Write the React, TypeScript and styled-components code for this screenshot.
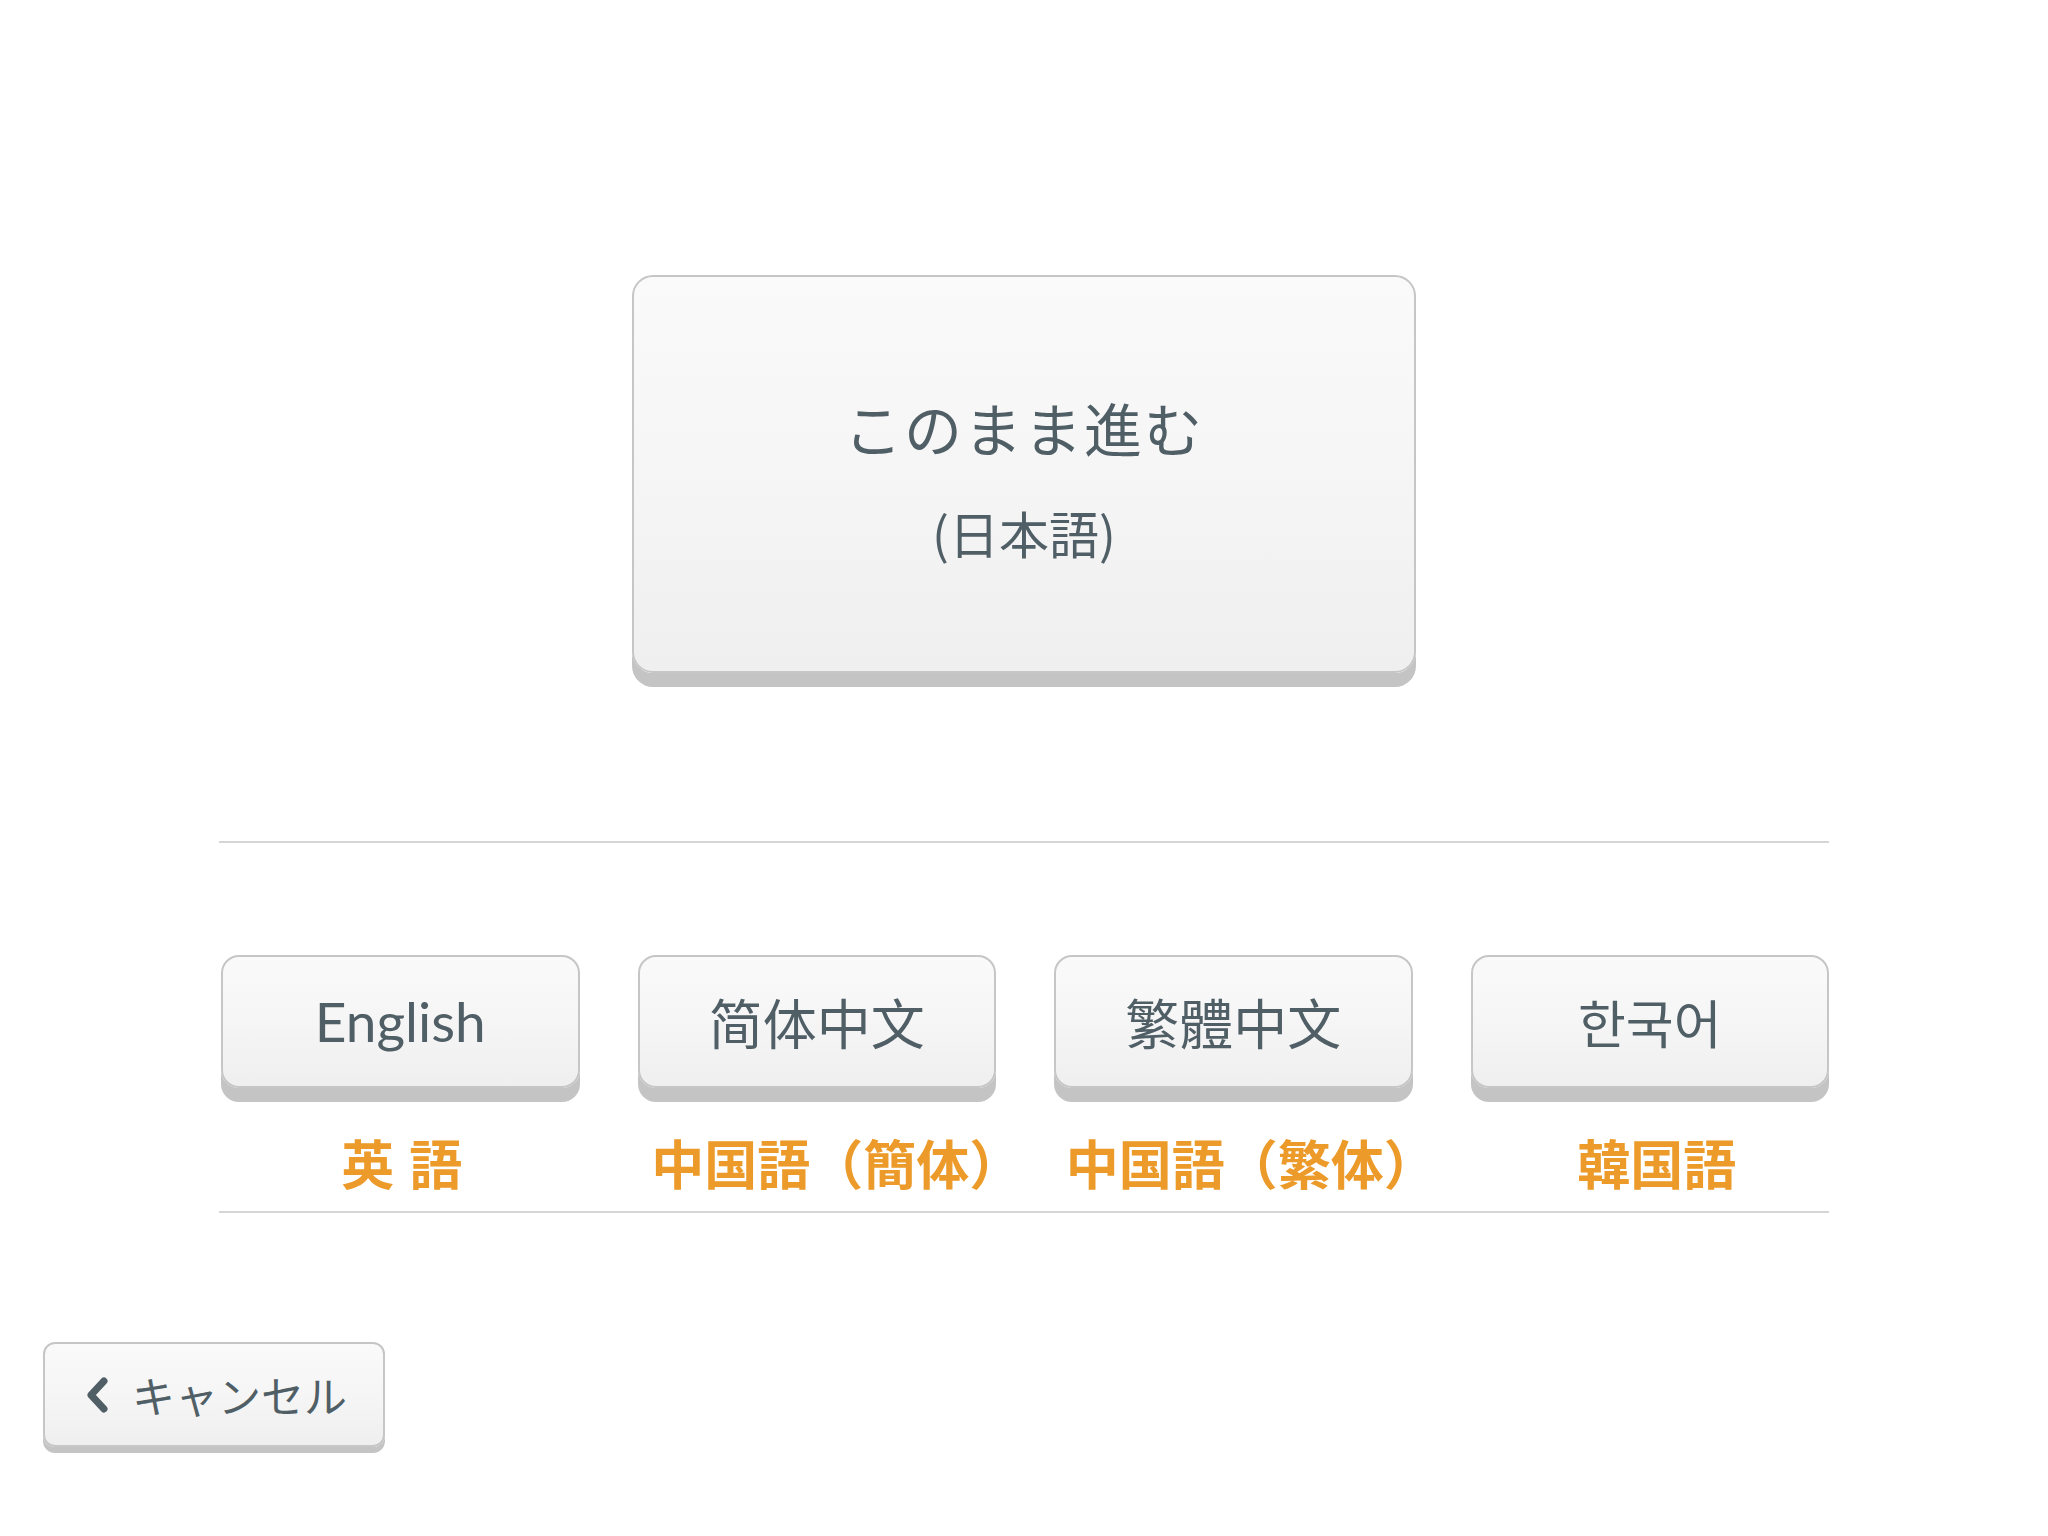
import React from "react";
import styled, { createGlobalStyle } from "styled-components";

const GlobalStyle = createGlobalStyle`
  html, body { margin: 0; padding: 0; background: #ffffff; }
  body { font-family: "Noto Sans CJK JP", "Noto Sans", sans-serif; }
`;

const TEXT = "#505e66";
const ORANGE = "#ec9a29";

const Page = styled.div`
  width: 100%;
  min-height: 1536px;
  display: flex;
  flex-direction: column;
  background: #ffffff;
`;

const Hero = styled.div`
  display: flex;
  justify-content: center;
  padding-top: 275px;
`;

const buttonSurface = `
  box-sizing: border-box;
  border: 2px solid #c6c6c6;
  background: linear-gradient(to bottom, #fafafa 0%, #f6f6f6 45%, #efefef 100%);
  color: ${TEXT};
  cursor: pointer;
`;

const MainButton = styled.button`
  ${buttonSurface}
  width: 784px;
  height: 398px;
  border-radius: 21px;
  box-shadow: 0 14px 0 #c4c4c4;
  display: flex;
  flex-direction: column;
  align-items: center;
  justify-content: flex-start;
  padding: 120px 0 0;
  gap: 48px;
`;

const MainTitle = styled.span`
  font-family: "Noto Sans CJK JP", sans-serif;
  font-size: 58px;
  font-weight: 400;
  line-height: 60px;
  letter-spacing: 2px;
`;

const MainSub = styled.span`
  font-family: "Noto Sans CJK JP", sans-serif;
  font-size: 50px;
  font-weight: 400;
  line-height: 54px;
`;

const Section = styled.div`
  width: 1610px;
  margin: 168px auto 0;
  display: flex;
  flex-direction: column;
`;

const Divider = styled.div`
  height: 2px;
  background: #d6d6d6;
`;

const LangGrid = styled.div`
  display: grid;
  grid-template-columns: repeat(4, minmax(0, 1fr));
  column-gap: 58px;
  margin: 112px 0 19px 2px;
`;

const LangItem = styled.div`
  display: flex;
  flex-direction: column;
  align-items: center;
  min-width: 0;
`;

const fontFor: Record<string, { family: string; size: number }> = {
  en: { family: `Lato, "Noto Sans", sans-serif`, size: 55 },
  sc: { family: `"Noto Sans CJK SC", sans-serif`, size: 54 },
  tc: { family: `"Noto Sans CJK TC", sans-serif`, size: 54 },
  ko: { family: `"Noto Sans CJK KR", sans-serif`, size: 52 },
};

const LangButton = styled.button<{ $font: string }>`
  ${buttonSurface}
  width: 100%;
  height: 133px;
  border-radius: 18px;
  box-shadow: 0 14px 0 #c4c4c4;
  display: flex;
  align-items: center;
  justify-content: center;
  padding: 0;
  font-family: ${(p) => fontFor[p.$font].family};
  font-size: ${(p) => fontFor[p.$font].size}px;
  font-weight: 400;
  line-height: 1;
`;

const LangLabel = styled.div<{ $shift: number }>`
  margin-top: 44px;
  height: 60px;
  font-family: "Noto Sans CJK JP", sans-serif;
  font-size: 53px;
  font-weight: 700;
  line-height: 60px;
  color: ${ORANGE};
  white-space: pre;
  word-spacing: 3px;
  text-spacing-trim: space-all;
  padding-left: ${(p) => p.$shift}px;
`;

const Footer = styled.div`
  display: flex;
  padding: 129px 43px 0;
`;

const CancelButton = styled.button`
  ${buttonSurface}
  width: 342px;
  height: 105px;
  border-radius: 12px;
  box-shadow: 0 6px 0 #c4c4c4;
  display: flex;
  align-items: center;
  padding: 0 0 0 41px;
  gap: 22px;
  font-family: "Noto Sans CJK JP", sans-serif;
  font-size: 43px;
  font-weight: 400;
  line-height: 1;
`;

const Chevron = () => (
  <svg width="24" height="36" viewBox="0 0 24 36" aria-hidden="true">
    <polyline
      points="18,4 5,18 18,32"
      fill="none"
      stroke={TEXT}
      strokeWidth="7"
      strokeLinecap="round"
      strokeLinejoin="round"
    />
  </svg>
);

const languages = [
  { key: "en", text: "English", label: "英 語", shift: 3 },
  { key: "sc", text: "简体中文", label: "中国語（簡体）", shift: 40 },
  { key: "tc", text: "繁體中文", label: "中国語（繁体）", shift: 36 },
  { key: "ko", text: "한국어", label: "韓国語", shift: 14 },
];

export default function App() {
  return (
    <>
      <GlobalStyle />
      <Page>
        <Hero>
          <MainButton>
            <MainTitle>このまま進む</MainTitle>
            <MainSub>(日本語)</MainSub>
          </MainButton>
        </Hero>
        <Section>
          <Divider />
          <LangGrid>
            {languages.map((l) => (
              <LangItem key={l.key}>
                <LangButton $font={l.key}>{l.text}</LangButton>
                <LangLabel $shift={l.shift}>{l.label}</LangLabel>
              </LangItem>
            ))}
          </LangGrid>
          <Divider />
        </Section>
        <Footer>
          <CancelButton>
            <Chevron />
            <span>キャンセル</span>
          </CancelButton>
        </Footer>
      </Page>
    </>
  );
}
